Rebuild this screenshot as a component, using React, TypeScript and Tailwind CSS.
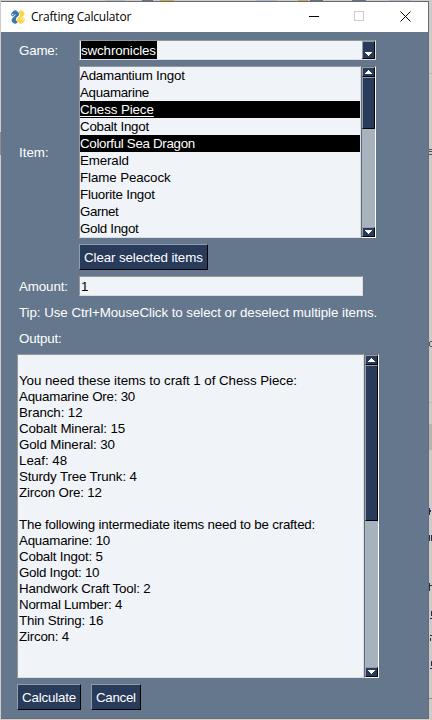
import React from "react";

const games = "swchronicles";
const items: { name: string; ls: string; selected?: boolean; active?: boolean }[] = [
  { name: "Adamantium Ingot", ls: "tracking-[-0.22px]" },
  { name: "Aquamarine", ls: "tracking-[-0.3px]" },
  { name: "Chess Piece", ls: "tracking-[-0.1px]", selected: true, active: true },
  { name: "Cobalt Ingot", ls: "tracking-[-0.25px]" },
  { name: "Colorful Sea Dragon", ls: "tracking-[-0.31px]", selected: true },
  { name: "Emerald", ls: "tracking-[-0.12px]" },
  { name: "Flame Peacock", ls: "tracking-[-0.1px]" },
  { name: "Fluorite Ingot", ls: "tracking-[-0.22px]" },
  { name: "Garnet", ls: "tracking-[-0.4px]" },
  { name: "Gold Ingot", ls: "tracking-[-0.3px]" },
];

const output: [string, string][] = [
  ["", ""],
  ["You need these items to craft 1 of Chess Piece:", "tracking-[-0.05px]"],
  ["Aquamarine Ore: 30", "tracking-[-0.22px]"],
  ["Branch: 12", "tracking-[-0.1px]"],
  ["Cobalt Mineral: 15", "tracking-[-0.12px]"],
  ["Gold Mineral: 30", "tracking-[-0.12px]"],
  ["Leaf: 48", "tracking-[0px]"],
  ["Sturdy Tree Trunk: 4", "tracking-[-0.15px]"],
  ["Zircon Ore: 12", "tracking-[-0.17px]"],
  ["", ""],
  ["The following intermediate items need to be crafted:", "tracking-[-0.19px]"],
  ["Aquamarine: 10", "tracking-[-0.22px]"],
  ["Cobalt Ingot: 5", "tracking-[-0.2px]"],
  ["Gold Ingot: 10", "tracking-[-0.25px]"],
  ["Handwork Craft Tool: 2", "tracking-[-0.17px]"],
  ["Normal Lumber: 4", "tracking-[-0.22px]"],
  ["Thin String: 16", "tracking-[-0.17px]"],
  ["Zircon: 4", "tracking-[-0.2px]"],
];

const raised = "border border-t-[#949dad] border-l-[#949dad] border-r-black border-b-black bg-[#283b5b]";
const sunken = "border border-t-[#969696] border-l-[#969696] border-r-[#d9dde2] border-b-[#d9dde2] bg-[#f0f3f7]";

function Arrow({ up }: { up?: boolean }) {
  return (
    <svg width="7" height="4" viewBox="0 0 7 4" shapeRendering="crispEdges" fill="#fff">
      {up ? <path d="M3 0h1v1h1v1h1v1h1v1H0V3h1V2h1V1h1z" /> : <path d="M0 0h7v1H6v1H5v1H4v1H3V3H2V2H1V1H0z" />}
    </svg>
  );
}

function Scrollbar({ thumb }: { thumb: string }) {
  return (
    <div className="flex w-[15px] shrink-0 flex-col border border-t-[#646b73] border-l-[#646b73] border-r-white border-b-white bg-[#a6b2be]">
      <div className={`flex h-[10px] shrink-0 items-center justify-center ${raised}`}><Arrow up /></div>
      <div className={`shrink-0 ${thumb} ${raised}`} />
      <div className={`mt-auto flex h-[10px] shrink-0 items-center justify-center ${raised}`}><Arrow /></div>
    </div>
  );
}

function Button({ children, className }: { children: React.ReactNode; className: string }) {
  return <button className={`flex h-[26px] items-center pt-px pl-1 whitespace-nowrap text-white ${raised} ${className}`}>{children}</button>;
}

function Logo() {
  return (
    <svg width="16" height="16" viewBox="0 0 16 16">
      <g transform="rotate(-45 8 8) translate(.4 .4) scale(.95)">
        <path fill="#3a78ab" d="M7.800 0C5.400 0 4.300.9 4.300 2.400V4H8v.7H3C1.100 4.700 0 6 0 8.100s1 3.500 2.700 3.500H4V9.900c0-1.500 1.200-2.500 2.700-2.500h3c1.200 0 2-.9 2-2V2.400C11.700.8 10.200 0 7.800 0z" />
        <path fill="#ffd746" d="M8.200 16c2.400 0 3.500-.9 3.500-2.400V12H8v-.7h5c1.900 0 3-1.300 3-3.400s-1-3.500-2.700-3.500H12v1.700c0 1.500-1.200 2.500-2.700 2.500h-3c-1.200 0-2 .9-2 2v3C4.300 15.200 5.800 16 8.200 16z" />
        <circle cx="6" cy="2.200" r=".7" fill="#fff" />
        <circle cx="10" cy="13.800" r=".7" fill="#fff" />
      </g>
    </svg>
  );
}

/* Slivers of the desktop that stay visible around the window. */
function Desktop() {
  return (
    <svg className="absolute inset-0" width="432" height="720" shapeRendering="crispEdges">
      <path fill="#cbcbcb" d="M0 0h432v720H0z" />
      <path fill="#b0bccb" d="M105 0h20v1h-20zM256 0h21v1h-21zM389 0h22v1h-22z" />
      <path fill="#c9aa4c" d="M160 0h14v1h-14zM298 0h10v1h-10z" />
      <path fill="#61718c" d="M142 0h11v1h-11zM310 0h13v1h-13zM352 0h14v1h-14z" />
      <path fill="#8d8d8d" d="M0 132h1v23H0zM429 698h3v1h-3z" />
      <path fill="#b4b4b4" d="M429 73h3v1h-3zM429 402h3v1h-3zM429 424h3v26h-3z" />
      <path fill="#4a4f63" d="M429 149h3v1h-3zM429 151h3v1h-3zM429 154h3v1h-3zM429 342h1v4h-1zM430 341h2v1h-2zM430 346h2v1h-2z" />
      <path fill="#252b50" d="M429 508h1v7h-1zM430 510h1v2h-1zM429 535h1v6h-1zM431 535h1v6h-1zM429 583h1v8h-1zM430 585h2v1h-2zM431 611h1v5h-1zM430 618h2v1h-2zM430 635h2v1h-2zM430 638h1v3h-1zM431 661h1v5h-1zM430 668h2v1h-2z" />
    </svg>
  );
}

export default function App() {
  return (
    <div className="relative h-[720px] w-[432px] overflow-hidden pt-px pl-px font-['Liberation_Sans',Arial,sans-serif] text-[13.33px] leading-4">
      <Desktop />
      <div className="relative flex h-[718px] w-[428px] flex-col border border-l-0 border-[#6c6c6c] bg-[#64778d]">
        <header className="flex h-[30px] shrink-0 items-center bg-white pl-[9px]">
          <Logo />
          <h1 className="ml-[5px] font-['Open_Sans','Noto_Sans',sans-serif] text-[12px] tracking-[-0.2px] text-black">Crafting Calculator</h1>
          <svg className="ml-auto mr-[17px]" width="102" height="12" viewBox="0 0 102 12" fill="none" shapeRendering="crispEdges">
            <path d="M0 5.500h10" stroke="#000" />
            <path d="M45.500 .5h9v9h-9z" stroke="#ccc" />
            <path d="M91.500 .5l10 10M101.500 .5l-10 10" stroke="#000" shapeRendering="auto" />
          </svg>
        </header>
        <main className="flex flex-1 flex-col pt-2 pl-4">
          <div className="flex h-5 items-center">
            <label className="w-[62px] pt-px pl-0.5 tracking-[-0.2px] text-white">Game:</label>
            <div className={`flex h-5 w-[297px] pl-px ${sunken}`}>
              <span className="w-[76px] bg-black pt-px leading-[17px] tracking-[-0.12px] text-white">{games}</span>
              <div className={`ml-auto flex w-[13px] items-end justify-center pb-[2px] ${raised}`}><Arrow /></div>
            </div>
          </div>
          <div className="mt-1.5 flex h-[172px] items-center">
            <label className="w-[62px] pt-0.5 pl-0.5 text-white">Item:</label>
            <div className="flex h-[172px]">
              <ul className={`w-[282px] ${sunken}`}>
                {items.map((it) => (
                  <li key={it.name} className={`h-[17px] leading-[17px] ${it.ls} ${it.selected ? "bg-black text-white" : "text-black"}`}>
                    <span className={it.active ? "underline underline-offset-2" : ""}>{it.name}</span>
                  </li>
                ))}
              </ul>
              <Scrollbar thumb="h-[52px]" />
            </div>
          </div>
          <Button className="mt-1.5 ml-[62px] w-[129px] tracking-[-0.1px]">Clear selected items</Button>
          <div className="mt-1.5 flex h-5 items-center">
            <label className="w-[62px] pt-0.5 pl-0.5 tracking-[-0.1px] text-white">Amount:</label>
            <div className={`h-5 w-[284px] pt-px pl-px leading-[18px] text-black ${sunken}`}>1</div>
          </div>
          <p className="mt-2 h-[18px] pl-0.5 leading-[18px] tracking-[-0.05px] whitespace-nowrap text-white">Tip: Use Ctrl+MouseClick to select or deselect multiple items.</p>
          <p className="mt-2 h-[18px] pl-0.5 leading-[18px] tracking-[-0.15px] text-white">Output:</p>
          <div className="mt-1.5 flex h-[324px]">
            <div className={`w-[347px] pt-0.5 pl-px text-black ${sunken}`}>
              {output.map(([line, ls], i) => (
                <div key={i} className={`h-4 whitespace-nowrap ${ls}`}>{line}</div>
              ))}
            </div>
            <Scrollbar thumb="h-[156px]" />
          </div>
          <div className="mt-1.5 flex gap-2.5">
            <Button className="w-16 tracking-[-0.17px]">Calculate</Button>
            <Button className="w-[50px] tracking-[-0.3px]">Cancel</Button>
          </div>
        </main>
      </div>
    </div>
  );
}
